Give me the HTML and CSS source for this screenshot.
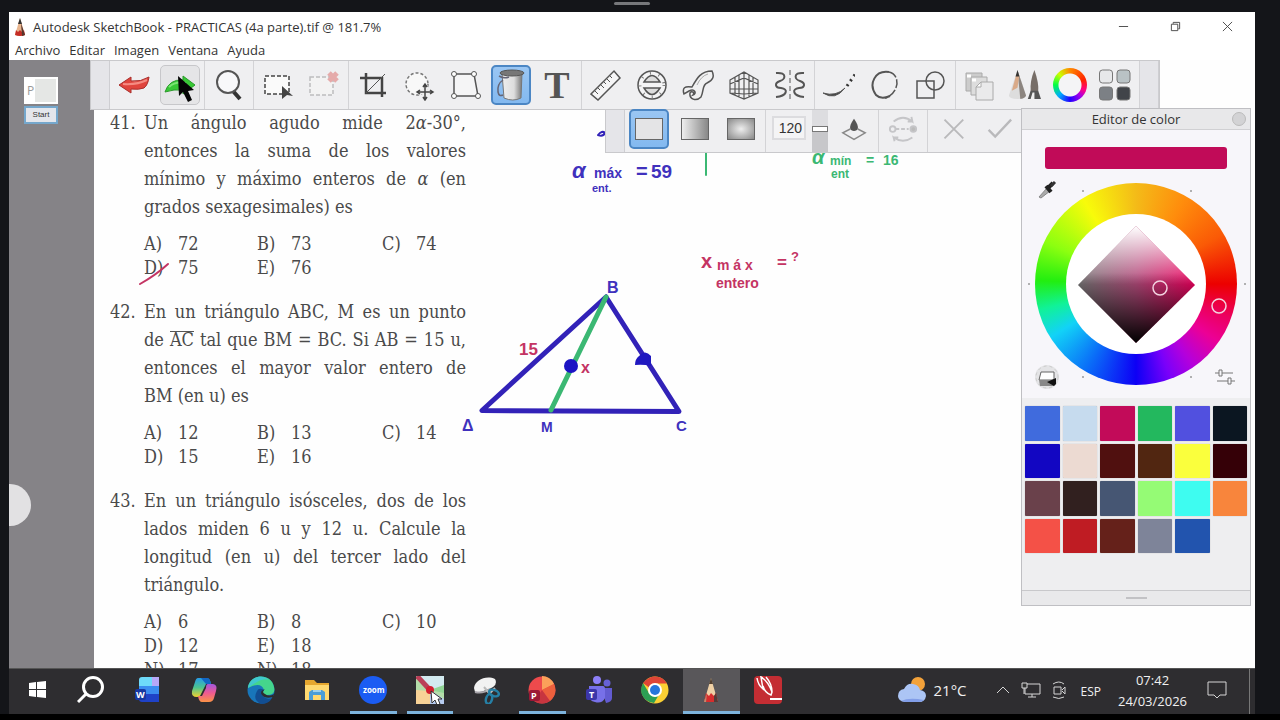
FILE: index.html
```html
<!DOCTYPE html>
<html lang="es">

<head>
    <meta charset="UTF-8">
    <meta name="viewport" content="width=device-width, initial-scale=1.0">
    <title>Autodesk SketchBook</title>
    <link rel="stylesheet" href="styles.css">
</head>

<body>
    <div class="notch"></div>

    <header class="titlebar">
        <svg class="app-icon" viewBox="0 0 12 20"><path d="M6 1 1 18q5 2 10 0z" fill="#e8b58e"/><path d="M6 1 4 7h4z" fill="#333"/><path d="m2 13-1 5q5 2 10 0l-1-5-2 2-2-2-2 2z" fill="#c52d25"/><path d="m7 6 4 12-3 1z" fill="#57352c"/></svg>
        <h1 class="title">Autodesk SketchBook - PRACTICAS (4a parte).tif @ 181.7%</h1>
        <div class="window-controls">
            <button aria-label="Minimizar"><svg viewBox="0 0 12 12"><path d="M1 6h10"/></svg></button>
            <button aria-label="Restaurar"><svg viewBox="0 0 12 12"><path d="M1.5 3.500h7v7h-7zM3.500 3V1.500h7v7H9"/></svg></button>
            <button aria-label="Cerrar"><svg viewBox="0 0 12 12"><path d="m1 1 10 10M11 1 1 11"/></svg></button>
        </div>
    </header>

    <nav class="menu">
        <button>Archivo</button>
        <button>Editar</button>
        <button>Imagen</button>
        <button>Ventana</button>
        <button>Ayuda</button>
    </nav>

    <main class="workspace">
        <aside class="sidebar">
            <div class="thumb"><span>P</span></div>
            <button class="start">Start</button>
            <div class="puck"></div>
        </aside>

        <article class="page">
            <section class="question">
                <span class="num">41.</span>
                <p><span>Un ángulo agudo mide 2<i>α</i>-30°,</span><span>entonces la suma de los valores</span><span>mínimo y máximo enteros de <i>α</i> (en</span><span>grados sexagesimales) es</span></p>
                <ul class="options">
                    <li><b>A)</b>72</li><li><b>B)</b>73</li><li><b>C)</b>74</li>
                    <li><b>D)</b>75</li><li><b>E)</b>76</li>
                </ul>
            </section>
            <section class="question">
                <span class="num">42.</span>
                <p><span>En un triángulo ABC, M es un punto</span><span>de <span class="bar">AC</span> tal que BM = BC. Si AB = 15 u,</span><span>entonces el mayor valor entero de</span><span>BM (en u) es</span></p>
                <ul class="options">
                    <li><b>A)</b>12</li><li><b>B)</b>13</li><li><b>C)</b>14</li>
                    <li><b>D)</b>15</li><li><b>E)</b>16</li>
                </ul>
            </section>
            <section class="question">
                <span class="num">43.</span>
                <p><span>En un triángulo isósceles, dos de los</span><span>lados miden 6&nbsp;u y 12&nbsp;u. Calcule la</span><span>longitud (en u) del tercer lado del</span><span>triángulo.</span></p>
                <ul class="options">
                    <li><b>A)</b>6</li><li><b>B)</b>8</li><li><b>C)</b>10</li>
                    <li><b>D)</b>12</li><li><b>E)</b>18</li><li></li>
                    <li><b>N)</b>17</li><li><b>N)</b>18</li>
                </ul>
            </section>
        </article>

        <!-- pen strokes over the page -->
        <svg class="ink">
            <g transform="translate(-9 -60)">
                <path class="line blue" d="M606 297 482 410.500 679 411.500 606 297"/>
                <path class="line green" d="M606 297 551 410"/>
                <ellipse cx="571" cy="366" rx="7" ry="7" fill="#1c14c4"/>
                <path d="M635 365q0-6 4-9 6-7 12 0v10q-8-2-16-1z" fill="#2018c0"/>
                <path class="thin red" d="M140 284q16-9 28-20"/>
                <path class="thin green" d="M706 153v22"/>
                <path class="thin blue" d="M598 135q4-5 7-2-2 4-7 2"/>
                <g class="hand blue-text">
                    <text x="607" y="293" font-size="16">B</text>
                    <text x="462" y="431" font-size="16">Δ</text>
                    <text x="541" y="432" font-size="14">M</text>
                    <text x="676" y="431" font-size="15">C</text>
                    <text x="572" y="178" font-size="22" font-style="italic">α</text>
                    <text x="594" y="178" font-size="14">máx</text>
                    <text x="636" y="178" font-size="20">=</text>
                    <text x="651" y="178" font-size="19">59</text>
                    <text x="592" y="192" font-size="11">ent.</text>
                </g>
                <g class="hand green-text">
                    <text x="812" y="164" font-size="20" font-style="italic">α</text>
                    <text x="830" y="165" font-size="12">mín</text>
                    <text x="866" y="165" font-size="14">=</text>
                    <text x="883" y="165" font-size="14">16</text>
                    <text x="831" y="178" font-size="12">ent</text>
                </g>
                <g class="hand red-text">
                    <text x="519" y="355" font-size="17">15</text>
                    <text x="581" y="373" font-size="16">x</text>
                    <text x="701" y="268" font-size="20">x</text>
                    <text x="717" y="270" font-size="14">m á x</text>
                    <text x="777" y="268" font-size="17">=</text>
                    <text x="791" y="261" font-size="13">?</text>
                    <text x="716" y="288" font-size="14">entero</text>
                </g>
            </g>
        </svg>

        <div class="toolbar">
            <div class="grip"></div>
            <div class="group">
                <button aria-label="Deshacer"><svg viewBox="0 0 32 32"><path d="m1 16 12-8v4q10 1 18-4-1 8-5 11-5 2-13 1v4z" fill="#e0443d" stroke="#a92e2b"/><path d="M5 15q14 1 24-4" stroke="#f58b82" stroke-width="2" fill="none"/></svg></button>
                <button class="hover" aria-label="Rehacer"><svg viewBox="0 0 32 32"><path d="m31 16-12-9v4Q5 10 1 23q9-3 18-2v4z" fill="#38c936" stroke="#2b9a2b"/><path d="M5 18q6-6 17-4" stroke="#7be674" stroke-width="2" fill="none"/></svg></button>
            </div>
            <div class="group">
                <button aria-label="Zoom"><svg viewBox="0 0 32 32"><path d="m20 22 7 8" stroke="#333" stroke-width="4"/><circle cx="15" cy="13" r="11" fill="#f8f8fa" stroke="#555" stroke-width="2"/></svg></button>
            </div>
            <div class="group">
                <button aria-label="Seleccionar"><svg viewBox="0 0 32 32"><path d="M3 7h24v18H3z" fill="#fafafa" stroke="#444" stroke-width="1.500" stroke-dasharray="4 2"/><path d="m20 17 11 10-6-1-5 4z" fill="#444"/></svg></button>
                <button aria-label="Deseleccionar"><svg viewBox="0 0 32 32"><path d="M2 8h23v18H2z" fill="#f3f3f3" stroke="#bdbdbf" stroke-width="1.500" stroke-dasharray="4 2"/><path d="m21 4 8 8m0-8-8 8" stroke="#e5aaaa" stroke-width="5"/></svg></button>
            </div>
            <div class="group">
                <button aria-label="Recortar"><svg viewBox="0 0 32 32"><path d="M3 9h22v19M9 4v20h20" fill="none" stroke="#444" stroke-width="2.500"/><path d="M9 24 28 5" stroke="#555"/></svg></button>
                <button aria-label="Mover"><svg viewBox="0 0 32 32"><circle cx="14" cy="15" r="11" fill="#f8f8f8" stroke="#777" stroke-width="1.500" stroke-dasharray="3 2"/><path d="M22 16v14M15 23h14" stroke="#eee" stroke-width="5"/><path d="M22 16v14M15 23h14m-9-5 2-3 2 3m-4 10 2 3 2-3m-7-7-3 2 3 2m10-4 3 2-3 2" fill="none" stroke="#444" stroke-width="1.500"/></svg></button>
                <button aria-label="Distorsionar"><svg viewBox="0 0 32 32"><path d="M5 5h20l4 22H5z" fill="#f5f5f6" stroke="#555" stroke-width="1.500"/><g fill="#fff" stroke="#555"><circle cx="5" cy="5" r="2.500"/><circle cx="25" cy="5" r="2.500"/><circle cx="5" cy="27" r="2.500"/><circle cx="29" cy="27" r="2.500"/></g></svg></button>
                <button class="active" aria-label="Relleno"><svg viewBox="0 0 32 32"><defs><linearGradient id="can"><stop stop-color="#eee"/><stop offset=".6" stop-color="#ddd"/><stop offset="1" stop-color="#777"/></linearGradient></defs><path d="M7 4h20l-1 25q-8 4-17 0z" fill="url(#can)" stroke="#777"/><ellipse cx="17" cy="4" rx="12" ry="3" fill="#777" stroke="#555"/><path d="M8 11Q2 15 3 23q1 5 5 3M4 7q5 3 10 1" fill="none" stroke="#667" stroke-width="1.500"/></svg></button>
                <button class="type" aria-label="Texto">T</button>
            </div>
            <div class="group">
                <button aria-label="Regla"><svg viewBox="0 0 32 32"><path d="M1 25 24 2l6 7L8 31z" fill="#f6f6f7" stroke="#555" stroke-width="1.500"/><path d="m5 22 3 3m0-6 2 2m1-5 3 3m0-6 2 2m1-5 3 3m0-6 2 2" stroke="#555"/></svg></button>
                <button aria-label="Elipse"><svg viewBox="0 0 32 32" fill="#f4f4f5" stroke="#555" stroke-width="1.500"><circle cx="16" cy="16" r="14"/><circle cx="16" cy="16" r="12" fill="none" stroke-width="3" stroke="#777" stroke-dasharray="1 8"/><path d="M8 13q8-13 16 0zM8 19q8 13 16 0z" fill="#ddd"/></svg></button>
                <button aria-label="Curva francesa"><svg viewBox="0 0 32 32"><path d="M2 25q-3-9 8-7C15 9 19 2 30 2q4 8-5 12c-5 2-3 8-6 14-5 5-12 2-11-4 2-3 5 0 3 2 4-1 2-7-4-4z" fill="#f0f0f1" stroke="#555" stroke-width="1.500"/><path d="M15 16q4-9 11-11" fill="none" stroke="#aaa"/></svg></button>
                <button aria-label="Perspectiva"><svg viewBox="0 0 32 32" fill="none" stroke="#555" stroke-width="1.200"><path d="m2 11 14-8 14 8v13l-14 6-14-6zM16 3v27M2 15l14-6 14 6M2 20h28M2 24l14 1 14-1M7 8v18M11 6v22M21 6v22M25 8v18"/></svg></button>
                <button aria-label="Simetría"><svg viewBox="0 0 32 32" fill="none" stroke="#555" stroke-width="2"><path d="M2 4c12-1 9 7 4 8-6 2-5 7 1 7 8 1 6 8-5 9M30 4c-12-1-9 7-4 8 6 2 5 7-1 7-8 1-6 8 5 9"/><path d="M16 1v31" stroke-width="1" stroke-dasharray="5 3"/></svg></button>
            </div>
            <div class="group">
                <button aria-label="Trazo"><svg viewBox="0 0 32 32"><path d="M0 24q12 8 22-5-9 9-22 5z" fill="#444" stroke="#555"/><path d="m24 17 9-13" stroke="#333" stroke-width="3" stroke-dasharray="2 4"/></svg></button>
                <button aria-label="Trazo predictivo"><svg viewBox="0 0 32 32" fill="none" stroke="#555"><path d="M20 3C6 1-1 15 7 26q5 5 14 1" stroke-width="2"/><path d="M20 3c13 3 9 23-4 26" stroke-width="1.500" stroke-dasharray="9 2"/></svg></button>
                <button aria-label="Formas"><svg viewBox="0 0 32 32" fill="none" stroke="#555" stroke-width="1.500"><path d="M2 12h17v17H2z"/><circle cx="20" cy="12" r="9"/></svg></button>
            </div>
            <div class="group tight">
                <button aria-label="Capas"><svg viewBox="0 0 32 32" stroke="#aaa"><path d="M2 4h16v18H2z" fill="#ccc"/><path d="M7 8h16v18H7z" fill="#ddd"/><path d="m12 18 5-5h12v18H12z" fill="#eaeaeb"/><path d="M12 18h5v-5z" fill="#fff"/><path d="M3 7h4M8 11h4" stroke="#fff" stroke-width="3"/></svg></button>
                <button aria-label="Pinceles"><svg viewBox="0 0 34 32"><path d="M9 0 0 27q0 4 9 4t9-4z" fill="#ddd"/><path d="m9 0 3 31q6-1 6-4z" fill="#8c8580"/><path d="m8 4-5 18 6-3 2-13z" fill="#d9aa89"/><path d="m9 0-2 7h4z" fill="#333"/><path d="M27 0q-5 12-4 23h8q1-9-4-23" fill="#776e68"/><path d="M23 22h8l3 9H20z" fill="#555"/><path d="m25 24-2 7h4v-7" fill="#eee"/></svg></button>
                <button aria-label="Editor de color"><span class="color-ring"></span></button>
                <button aria-label="Biblioteca"><svg viewBox="0 0 32 32" stroke="#777"><rect x="0.500" y="1" width="13" height="13" rx="3" fill="#e7e8ea"/><rect x="18" y="1" width="13" height="13" rx="3" fill="#b9c2c5"/><rect x="0.500" y="18" width="13" height="13" rx="3" fill="#7c8085"/><rect x="18" y="18" width="13" height="13" rx="3" fill="#414449"/></svg></button>
            </div>
            <div class="grip"></div>
        </div>

        <div class="fillbar">
            <div class="grip"></div>
            <div class="group">
                <button class="active" aria-label="Relleno sólido"><span class="fill solid"></span></button>
                <button aria-label="Degradado lineal"><span class="fill linear"></span></button>
                <button aria-label="Degradado radial"><span class="fill radial"></span></button>
            </div>
            <div class="group">
                <input class="amount" type="text" value="120" aria-label="Tolerancia">
                <input class="slider" type="range" min="0" max="255" value="143" aria-label="Tolerancia">
                <button aria-label="Todas las capas"><svg viewBox="0 0 32 32"><path d="m12 16-8 4 12 7 12-7-8-4" fill="none" stroke="#888" stroke-width="1.500"/><path d="M16 5c-7 10-4 13 0 13 4 0 7-3 0-13" fill="#555"/></svg></button>
            </div>
            <div class="group">
                <button aria-label="Invertir"><svg viewBox="0 0 32 32" fill="none" stroke="#c5c5c8" stroke-width="2"><path d="M6 8q10-8 20 0l-1-5m1 5h-5M26 25q-10 7-20 0l1 4m-1-4h5"/><circle cx="5" cy="16" r="3"/><path d="M8 16h14" stroke-dasharray="4 2"/><circle cx="27" cy="16" r="3" fill="#bbb"/></svg></button>
            </div>
            <div class="group">
                <button aria-label="Cancelar"><svg viewBox="0 0 32 32"><path d="m8 6 20 20M28 6 8 26" stroke="#b9b9bb" stroke-width="2"/></svg></button>
                <button aria-label="Aceptar"><svg viewBox="0 0 32 32"><path d="m6 17 7 7L30 6" stroke="#b9b9bb" stroke-width="2.500" fill="none"/></svg></button>
            </div>
        </div>

        <svg class="pointer" viewBox="0 0 18 28"><path d="m1 1 1 20 4-4 5 10 4-2-4-9 6-1z" fill="#050505"/></svg>

        <aside class="panel">
            <header class="panel-head">
                <h2>Editor de color</h2>
                <button class="panel-close" aria-label="Cerrar panel"></button>
            </header>
            <div class="picker">
                <button class="current" aria-label="Color actual"></button>
                <div class="wheel">
                    <svg viewBox="0 0 202 202">
                        <defs>
                            <linearGradient id="hue"><stop stop-color="#777"/><stop offset=".5" stop-color="#b34b7b"/><stop offset="1" stop-color="#f0005f"/></linearGradient>
                            <linearGradient id="light" x2="0" y2="1"><stop stop-color="#fff"/><stop offset=".5" stop-color="#fff" stop-opacity="0"/></linearGradient>
                            <linearGradient id="dark" x2="0" y2="1"><stop offset=".4" stop-opacity="0"/><stop offset="1"/></linearGradient>
                        </defs>
                        <circle cx="101" cy="101" r="70" fill="#fff"/>
                        <path d="m101 43 59 59-59 58-58-58z" fill="url(#hue)"/>
                        <path d="m101 43 59 59-59 58-58-58z" fill="url(#light)"/>
                        <path d="m101 43 59 59-59 58-58-58z" fill="url(#dark)"/>
                        <g fill="none" stroke="#f3d3e0" stroke-width="1.500"><circle cx="125" cy="105" r="7"/><circle cx="184" cy="123" r="7"/></g>
                    </svg>
                </div>
                <svg class="ticks" viewBox="0 0 220 190" fill="#999"><circle cx="2" cy="95" r="1"/><circle cx="218" cy="95" r="1"/><circle cx="56" cy="2" r="1"/><circle cx="164" cy="2" r="1"/><circle cx="56" cy="188" r="1"/><circle cx="164" cy="188" r="1"/></svg>
                <button class="corner dropper" aria-label="Cuentagotas"><svg viewBox="0 0 20 20"><path d="m2 17 8-9 3 3-9 7z" fill="#aaa" stroke="#888"/><path d="m9 6 5 6M11 8l5-5" stroke="#222" stroke-width="4"/><path d="m14 6 4-4" stroke="#333" stroke-width="3"/></svg></button>
                <button class="corner puck-color" aria-label="Transparente"><svg viewBox="0 0 26 26"><circle cx="13" cy="13" r="12" fill="#e4e4e6"/><circle cx="13" cy="13" r="11" fill="none" stroke="#ccc" stroke-dasharray="3 3"/><path d="M7 8h13v8H5z" fill="#fff" stroke="#666"/><path d="M5 16h17l-2 6H6z" fill="#888"/><path d="m13 18 9-4v6l-2 2z" fill="#111"/></svg></button>
                <button class="corner adjust" aria-label="Ajustes"><svg viewBox="0 0 20 18" fill="#f6f5f9" stroke="#777"><path d="M0 5h18M2 13h18"/><path d="M4 2h3v6H4zM13 10h3v6h-3z"/></svg></button>
            </div>
            <div class="swatches">
                <button class="c1" aria-label="Azul"></button>
                <button class="c2" aria-label="Celeste"></button>
                <button class="c3" aria-label="Magenta"></button>
                <button class="c4" aria-label="Verde"></button>
                <button class="c5" aria-label="Violeta"></button>
                <button class="c6" aria-label="Negro"></button>
                <button class="c7" aria-label="Azul puro"></button>
                <button class="c8" aria-label="Crema"></button>
                <button class="c9" aria-label="Granate"></button>
                <button class="c10" aria-label="Marrón"></button>
                <button class="c11" aria-label="Amarillo"></button>
                <button class="c12" aria-label="Granate oscuro"></button>
                <button class="c13" aria-label="Malva"></button>
                <button class="c14" aria-label="Café"></button>
                <button class="c15" aria-label="Pizarra"></button>
                <button class="c16" aria-label="Lima"></button>
                <button class="c17" aria-label="Cian"></button>
                <button class="c18" aria-label="Naranja"></button>
                <button class="c19" aria-label="Coral"></button>
                <button class="c20" aria-label="Rojo"></button>
                <button class="c21" aria-label="Teja"></button>
                <button class="c22" aria-label="Gris"></button>
                <button class="c23" aria-label="Azul medio"></button>
            </div>
            <footer class="panel-foot"></footer>
        </aside>
    </main>

    <footer class="taskbar">
        <div class="system">
            <button aria-label="Inicio"><svg viewBox="0 0 28 28" fill="#fff"><path d="m6 7 7-1v7H6zM14 6l9-1v8h-9zM6 14h7v7l-7-1zM14 14h9v8l-9-1z"/></svg></button>
            <button aria-label="Buscar"><svg viewBox="0 0 28 28" fill="none" stroke="#fff" stroke-width="3"><circle cx="16" cy="11" r="9.500"/><path d="m9 18-8 8"/></svg></button>
        </div>
        <div class="apps">
            <button aria-label="Word"><svg viewBox="0 0 28 28"><path d="M5 4q0-3 3-3h16v12H5z" fill="#6edafa"/><path d="M18 1h7v9h-7z" fill="#b7a8f8"/><path d="M5 10h20v9H5z" fill="#3b8cf0"/><path d="M5 18h20v8H8q-3 0-3-3z" fill="#1f42c8"/><rect x="1" y="13" width="11" height="11" rx="2" fill="#1737a0"/><text x="2" y="22" font-size="9" font-weight="700" fill="#fff">W</text></svg></button>
            <button aria-label="Copilot"><svg viewBox="0 0 28 28"><defs><linearGradient id="cp1" x2="0" y2="1"><stop stop-color="#279be8"/><stop offset=".5" stop-color="#4cc490"/><stop offset="1" stop-color="#f1d12f"/></linearGradient><linearGradient id="cp2" x2="0" y2="1"><stop stop-color="#a157dd"/><stop offset=".5" stop-color="#ef5a91"/><stop offset="1" stop-color="#fa9246"/></linearGradient></defs><path d="M8 2h9q3 0 4 6h-5l-5 10q-1 3-4 3-6 0-5-6l3-9q1-4 3-4z" fill="url(#cp1)"/><path d="M11 2h7q2 1 3 6h-5z" fill="#1267c5"/><path d="M18 8h5q5 1 3 7l-2 7q-1 4-5 4h-7q-3 0-4-6h4l4-8q0-4 2-4z" fill="url(#cp2)"/></svg></button>
            <button aria-label="Edge"><svg viewBox="0 0 28 28"><circle cx="14" cy="14" r="13.500" fill="#1876ba"/><path d="M1 12C2-2 24-4 27 11q2 8-7 8-6 0-3-5Q14 5 1 12z" fill="#45d58c"/><path d="M1 12C3 0 15-2 22 4q-7-3-21 8z" fill="#40c8cf"/><path d="M17 14q-4 4 0 7t8 1q-3 6-11 6Q5 24 10 15q2-4 7-1z" fill="#124e92"/><path d="M18 13q-4 3 0 5 4 3 9 0l-1 3q-8 2-11-2t3-6z" fill="#2c2b2e"/></svg></button>
            <button aria-label="Explorador de archivos"><svg viewBox="0 0 28 28"><path d="M2 4h9l3 3h12v17H2z" fill="#e6a72f"/><path d="M2 9h24v15H2z" fill="#ffd970"/><path d="M6 24v-8l3-2h10l3 2v8h-4v-5h-8v5z" fill="#4a9ed8"/><path d="M10 15h8" stroke="#9bd1ef" stroke-width="2"/></svg></button>
            <button class="open" aria-label="Zoom"><svg viewBox="0 0 28 28"><circle cx="14" cy="14" r="14" fill="#1b5cf3"/><text x="4" y="17" font-size="8" font-weight="700" fill="#fff">zoom</text></svg></button>
            <button class="open" aria-label="Pizarra"><svg viewBox="0 0 28 28"><rect width="28" height="28" rx="2" fill="#b4dda9"/><path d="M0 0h28v11L14 14z" fill="#d3eaf0"/><path d="m0 14 14 1v13H0z" fill="#f8d296"/><path d="m14 14 14-5v8z" fill="#92d596"/><path d="m14 14 14 9v5H14z" fill="#b6cbef"/><path d="m1 0 13 14" stroke="#ba4058" stroke-width="5"/><circle cx="14" cy="14" r="4" fill="#d31f31"/><path d="m15 15 1 12 3-3 2 5 3-1-2-5h4z" fill="#fff" stroke="#333"/></svg></button>
            <button aria-label="Recortes"><svg viewBox="0 0 28 28"><path d="M2 12C3 4 14-1 23 3q4 7-9 11-6 3-11 2z" fill="#f2f2f2"/><path d="M3 16q8 2 15-3" fill="none" stroke="#a6a3a9" stroke-width="2"/><path d="m12 11 5 6m6-5-6 6" stroke="#bbb" stroke-width="2"/><g fill="none" stroke="#267fa5" stroke-width="2.500"><ellipse cx="22" cy="17" rx="5" ry="3" transform="rotate(20 22 17)"/><ellipse cx="17" cy="23" rx="3" ry="5" transform="rotate(15 17 23)"/></g></svg></button>
            <button class="open" aria-label="PowerPoint"><svg viewBox="0 0 28 28"><circle cx="14" cy="14" r="13.500" fill="#ed4a4c"/><path d="M14 14V0q8 0 12 8z" fill="#fba15a"/><path d="m14 14 12-6q4 10-4 17z" fill="#ed603d"/><path d="m14 14 8 11q-8 5-16 0z" fill="#c7353f"/><rect x="1" y="14" width="11" height="11" rx="2" fill="#9b1836"/><text x="3" y="23" font-size="9" font-weight="700" fill="#fff">P</text></svg></button>
            <button aria-label="Teams"><svg viewBox="0 0 28 28"><circle cx="12" cy="4" r="4" fill="#8d80f8"/><circle cx="22" cy="7" r="3.500" fill="#6761d6"/><path d="M16 12h11v10q0 4-6 5z" fill="#625bd1"/><path d="M4 10h14q2 0 2 3v9q-3 6-10 4-6-1-6-7z" fill="#7770e8"/><rect x="1" y="13" width="11" height="11" rx="2" fill="#3c36a9"/><text x="4" y="22" font-size="9" font-weight="700" fill="#fff">T</text></svg></button>
            <button aria-label="Chrome"><svg viewBox="0 0 28 28"><circle cx="14" cy="14" r="13.500" fill="#fbd033"/><path d="M2 7Q8 0 14 0.500q8 0 12 7H14q-5 0-6 4z" fill="#df4536"/><path d="M2 7q-5 10 3 17 4 3 8 3l6-10q-5 7-11 0z" fill="#2c9f54"/><circle cx="14" cy="14" r="7" fill="#fff"/><circle cx="14" cy="14" r="5" fill="#2676db"/></svg></button>
            <button class="open current-app" aria-label="SketchBook"><svg viewBox="0 0 28 28"><path d="M14 2 7 26h14z" fill="#efd0a5"/><path d="m14 2-2 6h4z" fill="#514032"/><path d="m7 26 2-9 3 3 2-3 3 3 2-3 2 9z" fill="#d72d2d"/><path d="m17 20 2-3 2 9h-4z" fill="#533c39"/><path d="m10 17-3 9h2z" fill="#bc8c70"/></svg></button>
            <button aria-label="Notas"><svg viewBox="0 0 28 28"><rect width="28" height="28" rx="4" fill="#c42d33"/><path d="M3 2q1 7 6 11L7 1q7 4 11 15l-1 3q-6-2-8-9M12 1q6 7 6 15" fill="none" stroke="#fff" stroke-width="1.500"/><path d="M16 23h12" stroke="#fff" stroke-width="2"/></svg></button>
        </div>
        <div class="tray">
            <button class="weather"><svg viewBox="0 0 28 28"><circle cx="20" cy="8" r="7" fill="#f3a23a"/><path d="M7 26q-7-1-7-6 0-6 6-7 3-6 9-5 6 1 7 6 6 1 6 6-1 6-7 6z" fill="#acc5f5"/><path d="M3 25q8-4 23-1-2 2-5 2H7z" fill="#829ee8"/></svg>21°C</button>
            <button aria-label="Iconos ocultos"><svg class="small" viewBox="0 0 20 20"><path d="m4 13 6-6 6 6"/></svg></button>
            <button aria-label="Red"><svg class="small" viewBox="0 0 20 20"><path d="M4 4h15v10H4zM7 17h8M11 14v3"/><path d="M1 3h5v5H1zM3 8v6" fill="#333"/></svg></button>
            <button aria-label="Cámara"><svg class="small" viewBox="0 0 20 20"><path d="M5 7h7v7H5zm8 3 3-3v7l-3-3M4 4q6-4 11 0M4 17q6 3 11 0"/></svg></button>
            <span class="lang">ESP</span>
            <time class="clock" datetime="2026-03-24T07:42"><span>07:42</span><span>24/03/2026</span></time>
            <button aria-label="Notificaciones"><svg class="small" viewBox="0 0 20 20"><path d="M1 2h18v13h-6l-3 3-3-3H1z"/></svg></button>
        </div>
    </footer>
</body>

</html>
```

FILE: styles.css
```css
* {
    box-sizing: border-box;
}

body {
    margin: 0;
    height: 100vh;
    padding: 0 25px 0 9px;
    display: flex;
    flex-direction: column;
    background: #141519;
    border-bottom: 6px solid #000;
    font-family: "Open Sans", "Noto Sans", sans-serif;
    font-size: 12px;
    color: #333;
    overflow: hidden;
}

button {
    padding: 0;
    border: none;
    background: none;
    font: inherit;
    color: inherit;
}

svg {
    display: block;
}

.notch {
    width: 36px;
    height: 3px;
    margin: 2px auto 7px;
    border-radius: 2px;
    background: #77787b;
    flex: none;
}

/* title and menu */
.titlebar {
    display: flex;
    align-items: center;
    height: 29px;
    padding-left: 5px;
    background: #fff;
    flex: none;
}

.app-icon {
    width: 12px;
    height: 20px;
    margin-right: 7px;
}

.title {
    margin: 0;
    font-size: 13px;
    font-weight: 400;
}

.window-controls {
    display: flex;
    margin-left: auto;
    padding-right: 2px;
}

.window-controls button {
    width: 52px;
    height: 28px;
    display: grid;
    place-items: center;
}

.window-controls svg {
    width: 11px;
    height: 11px;
    fill: none;
    stroke: #444;
}

.menu {
    display: flex;
    gap: 9px;
    height: 19px;
    padding-left: 6px;
    background: #fff;
    font-size: 13px;
    line-height: 17px;
    flex: none;
}

/* workspace */
.workspace {
    position: relative;
    display: flex;
    flex: 1;
    min-height: 0;
    overflow: hidden;
    background: #fefefe;
}

.sidebar {
    width: 85px;
    padding: 17px 0 0 15px;
    background: #858387;
    overflow: hidden;
    position: relative;
    flex: none;
}

.thumb {
    width: 34px;
    height: 27px;
    padding: 5px 3px;
    background: linear-gradient(#e5e7e5, #e5e7e5) 11px 2px / 21px 23px no-repeat #fff;
    color: #999;
}

.start {
    width: 34px;
    height: 18px;
    border: 2px solid #75a7cc;
    background: #e4e6ec;
    font-family: "Liberation Sans", sans-serif;
    font-size: 8px;
}

.puck {
    position: absolute;
    left: -20px;
    top: 424px;
    width: 42px;
    height: 42px;
    border-radius: 50%;
    background: #e2e1e3;
}

.page {
    width: 372px;
    padding: 49px 0 0 16px;
    font-family: "DejaVu Serif Condensed", "Liberation Serif", serif;
    font-size: 18px;
    color: #4a4a4a;
}

.question {
    display: grid;
    grid-template-columns: 34px 1fr;
    margin-bottom: 18px;
    line-height: 28px;
}

.question p {
    margin: 0;
}

.question p > span {
    display: block;
    text-align-last: justify;
    white-space: nowrap;
}

.question p > span:last-child {
    text-align-last: left;
}

.bar {
    display: inline-block;
    border-top: 1px solid #555;
    line-height: 16px;
    text-align-last: left;
}

.options {
    grid-column: 2;
    display: grid;
    grid-template-columns: 113px 125px 1fr;
    margin: 11px 0 0;
    padding: 0;
    list-style: none;
    line-height: 24px;
}

.options li {
    display: flex;
}

.options b {
    width: 34px;
    font-weight: 400;
}

.ink {
    position: absolute;
    inset: 0;
    width: 100%;
    height: 100%;
}

.line {
    fill: none;
    stroke-width: 5px;
    stroke-linejoin: round;
    stroke-linecap: round;
}

.thin {
    fill: none;
    stroke-width: 2px;
    stroke-linecap: round;
}

.blue {
    stroke: #3222b8;
}

.green {
    stroke: #3bb873;
}

.red {
    stroke: #c43463;
}

.hand {
    font-family: "Liberation Sans", sans-serif;
    font-weight: 700;
}

.blue-text {
    fill: #4031bd;
}

.green-text {
    fill: #3bb873;
}

.red-text {
    fill: #c43463;
}

/* floating toolbars */
.toolbar,
.fillbar {
    position: absolute;
    display: flex;
    background: #efeff1;
    border: 1px solid #c9c9cc;
}

.toolbar {
    left: 81px;
    top: 0;
    height: 50px;
}

.fillbar {
    left: 596px;
    top: 49px;
    height: 44px;
}

.grip {
    width: 19px;
    background: #e5e5e9;
    border-right: 1px solid #ceced2;
}

.group {
    display: flex;
    align-items: center;
    gap: 6px;
    padding: 0 4px;
    border-right: 1px solid #d3d3d6;
}

.group.tight {
    gap: 5px;
}

.group button {
    width: 40px;
    height: 40px;
    display: grid;
    place-items: center;
    border: 1px solid transparent;
    border-radius: 5px;
}

.group svg {
    width: 32px;
    height: 32px;
}

.fillbar .group {
    padding-bottom: 5px;
}

.fillbar button svg {
    width: 30px;
    height: 30px;
}

.group .hover {
    background: #e5e5e7;
    border-color: #c7c7ca;
}

.group .active {
    background: linear-gradient(#9ac6f3, #83b9f0);
    border: 2px solid #4b86c4;
}

.group .type {
    font-family: "Liberation Serif", serif;
    font-weight: 700;
    font-size: 38px;
    line-height: 36px;
    color: #555;
}

.color-ring {
    width: 34px;
    height: 34px;
    border-radius: 50%;
    background: radial-gradient(circle, #f4f4f6 11px, transparent 12px), conic-gradient(#f80, #f20 70deg, #f08 110deg, #90e 140deg, #20f 180deg, #0af 225deg, #0f4 270deg, #cf0 315deg, #f80);
}

.fill {
    width: 28px;
    height: 22px;
    border: 1px solid #666;
}

.solid {
    background: #e4e4e6;
}

.linear {
    background: linear-gradient(to right, #eee, #888);
}

.radial {
    background: radial-gradient(#eee, #888);
}

.amount {
    width: 34px;
    height: 24px;
    margin: 0 0 2px 2px;
    padding: 0 2px;
    border: 2px solid #dcdcdf;
    background: #f4f4f5;
    font-family: "Liberation Sans", sans-serif;
    font-size: 14px;
    color: #333;
    text-align: right;
}

.slider {
    appearance: none;
    writing-mode: vertical-lr;
    direction: rtl;
    align-self: flex-start;
    width: 16px;
    height: 42px;
    margin: 0;
    background: linear-gradient(#dddde0 50%, #c7c7ca 50%);
}

.slider::-webkit-slider-thumb {
    appearance: none;
    width: 16px;
    height: 6px;
    border: 1px solid #777;
    background: #fff;
}

.pointer {
    position: absolute;
    left: 168px;
    top: 15px;
    width: 18px;
    height: 28px;
}

/* colour editor */
.panel {
    position: absolute;
    top: 48px;
    right: 4px;
    width: 230px;
    height: 498px;
    display: flex;
    flex-direction: column;
    border: 1px solid #bfbfc3;
    background: #eeeef0;
}

.panel-head {
    display: flex;
    align-items: center;
    height: 21px;
    padding: 0 4px 0 18px;
    background: #e8e8ea;
    border-bottom: 1px solid #d0d0d3;
}

.panel-head h2 {
    flex: 1;
    margin: 0;
    font-size: 13px;
    line-height: 18px;
    font-weight: 400;
    text-align: center;
}

.panel-close {
    width: 14px;
    height: 14px;
    border: 1px solid #bbb;
    border-radius: 50%;
    background: #d3d3d5;
}

.picker {
    position: relative;
    height: 268px;
    padding-top: 17px;
    background: #f7f6fa;
}

.current {
    display: block;
    width: 182px;
    height: 22px;
    margin: 0 auto 14px;
    border-radius: 3px;
    background: #c10b58;
}

.wheel {
    width: 202px;
    height: 202px;
    margin: 0 auto;
    border-radius: 50%;
    background: conic-gradient(#f4bb18, #ff8c0c 30deg, #fa5a06 60deg, #ec0000 90deg, #ec0060 110deg, #ec0095 125deg, #b400dc 145deg, #7a00fa 160deg, #0d00f5 180deg, #0a6df8 210deg, #12d2f7 238deg, #10f298 255deg, #22ee10 272deg, #8cff10 295deg, #f8fb0a 328deg, #f4bb18);
}

.ticks {
    position: absolute;
    left: 5px;
    top: 59px;
    width: 220px;
    height: 190px;
}

.corner {
    position: absolute;
}

.dropper {
    left: 15px;
    top: 50px;
    width: 20px;
}

.puck-color {
    left: 12px;
    bottom: 8px;
    width: 26px;
}

.adjust {
    right: 15px;
    bottom: 12px;
    width: 20px;
}

.swatches {
    display: grid;
    grid-template-columns: repeat(6, 1fr);
    gap: 3px;
    padding: 8px 3px;
}

.swatches button {
    aspect-ratio: 1;
    border-radius: 1px;
    box-shadow: 0 0 1px #999;
}

.c1 { background: #406bdd; }
.c2 { background: #c6dbee; }
.c3 { background: #c20b59; }
.c4 { background: #23b85e; }
.c5 { background: #5150df; }
.c6 { background: #0b1621; }
.c7 { background: #1206c2; }
.c8 { background: #ecdad2; }
.c9 { background: #50100f; }
.c10 { background: #512611; }
.c11 { background: #faff3d; }
.c12 { background: #350007; }
.c13 { background: #6a414b; }
.c14 { background: #31201f; }
.c15 { background: #465673; }
.c16 { background: #95fb75; }
.c17 { background: #3efcf0; }
.c18 { background: #f8853c; }
.c19 { background: #f45147; }
.c20 { background: #bf1c23; }
.c21 { background: #65211a; }
.c22 { background: #7e8499; }
.c23 { background: #2254ae; }

.panel-foot {
    height: 15px;
    margin-top: auto;
    display: grid;
    place-items: center;
    border-top: 1px solid #c8c8cb;
    background: #e9e9eb;
}

.panel-foot::after {
    content: "";
    width: 21px;
    height: 2px;
    background: #c2c2c5;
}

/* taskbar */
.taskbar {
    display: flex;
    height: 46px;
    background: #2e2d30;
    border-top: 1px solid #555;
    color: #f0f0f0;
    flex: none;
}

.taskbar button {
    display: grid;
    place-items: center;
    position: relative;
    padding-bottom: 3px;
}

.taskbar svg {
    width: 28px;
    height: 28px;
}

.system {
    display: grid;
    grid-template-columns: 55px 54px;
    margin-right: 2px;
}

.apps {
    display: grid;
    grid-template-columns: repeat(12, 1fr);
    width: 676px;
}

.open::after {
    content: "";
    position: absolute;
    left: 5px;
    right: 5px;
    bottom: 0;
    height: 3px;
    background: #7db3dc;
}

.current-app {
    background: #59575a;
}

.current-app::after {
    left: 0;
    right: 0;
}

.tray {
    display: flex;
    align-items: center;
    margin-left: auto;
    margin-right: 5px;
    padding-right: 18px;
    border-right: 1px solid #777;
}

.taskbar .weather {
    display: flex;
    align-items: center;
    gap: 8px;
    margin-right: 22px;
    font-size: 15px;
}

.taskbar .small {
    width: 20px;
    height: 20px;
    margin: 0 4px;
    fill: none;
    stroke: #d5d5d5;
}

.lang {
    margin: 0 17px 0 8px;
}

.clock {
    display: grid;
    margin-right: 16px;
    padding-bottom: 2px;
    font-size: 13px;
    line-height: 21px;
    text-align: center;
}
```
